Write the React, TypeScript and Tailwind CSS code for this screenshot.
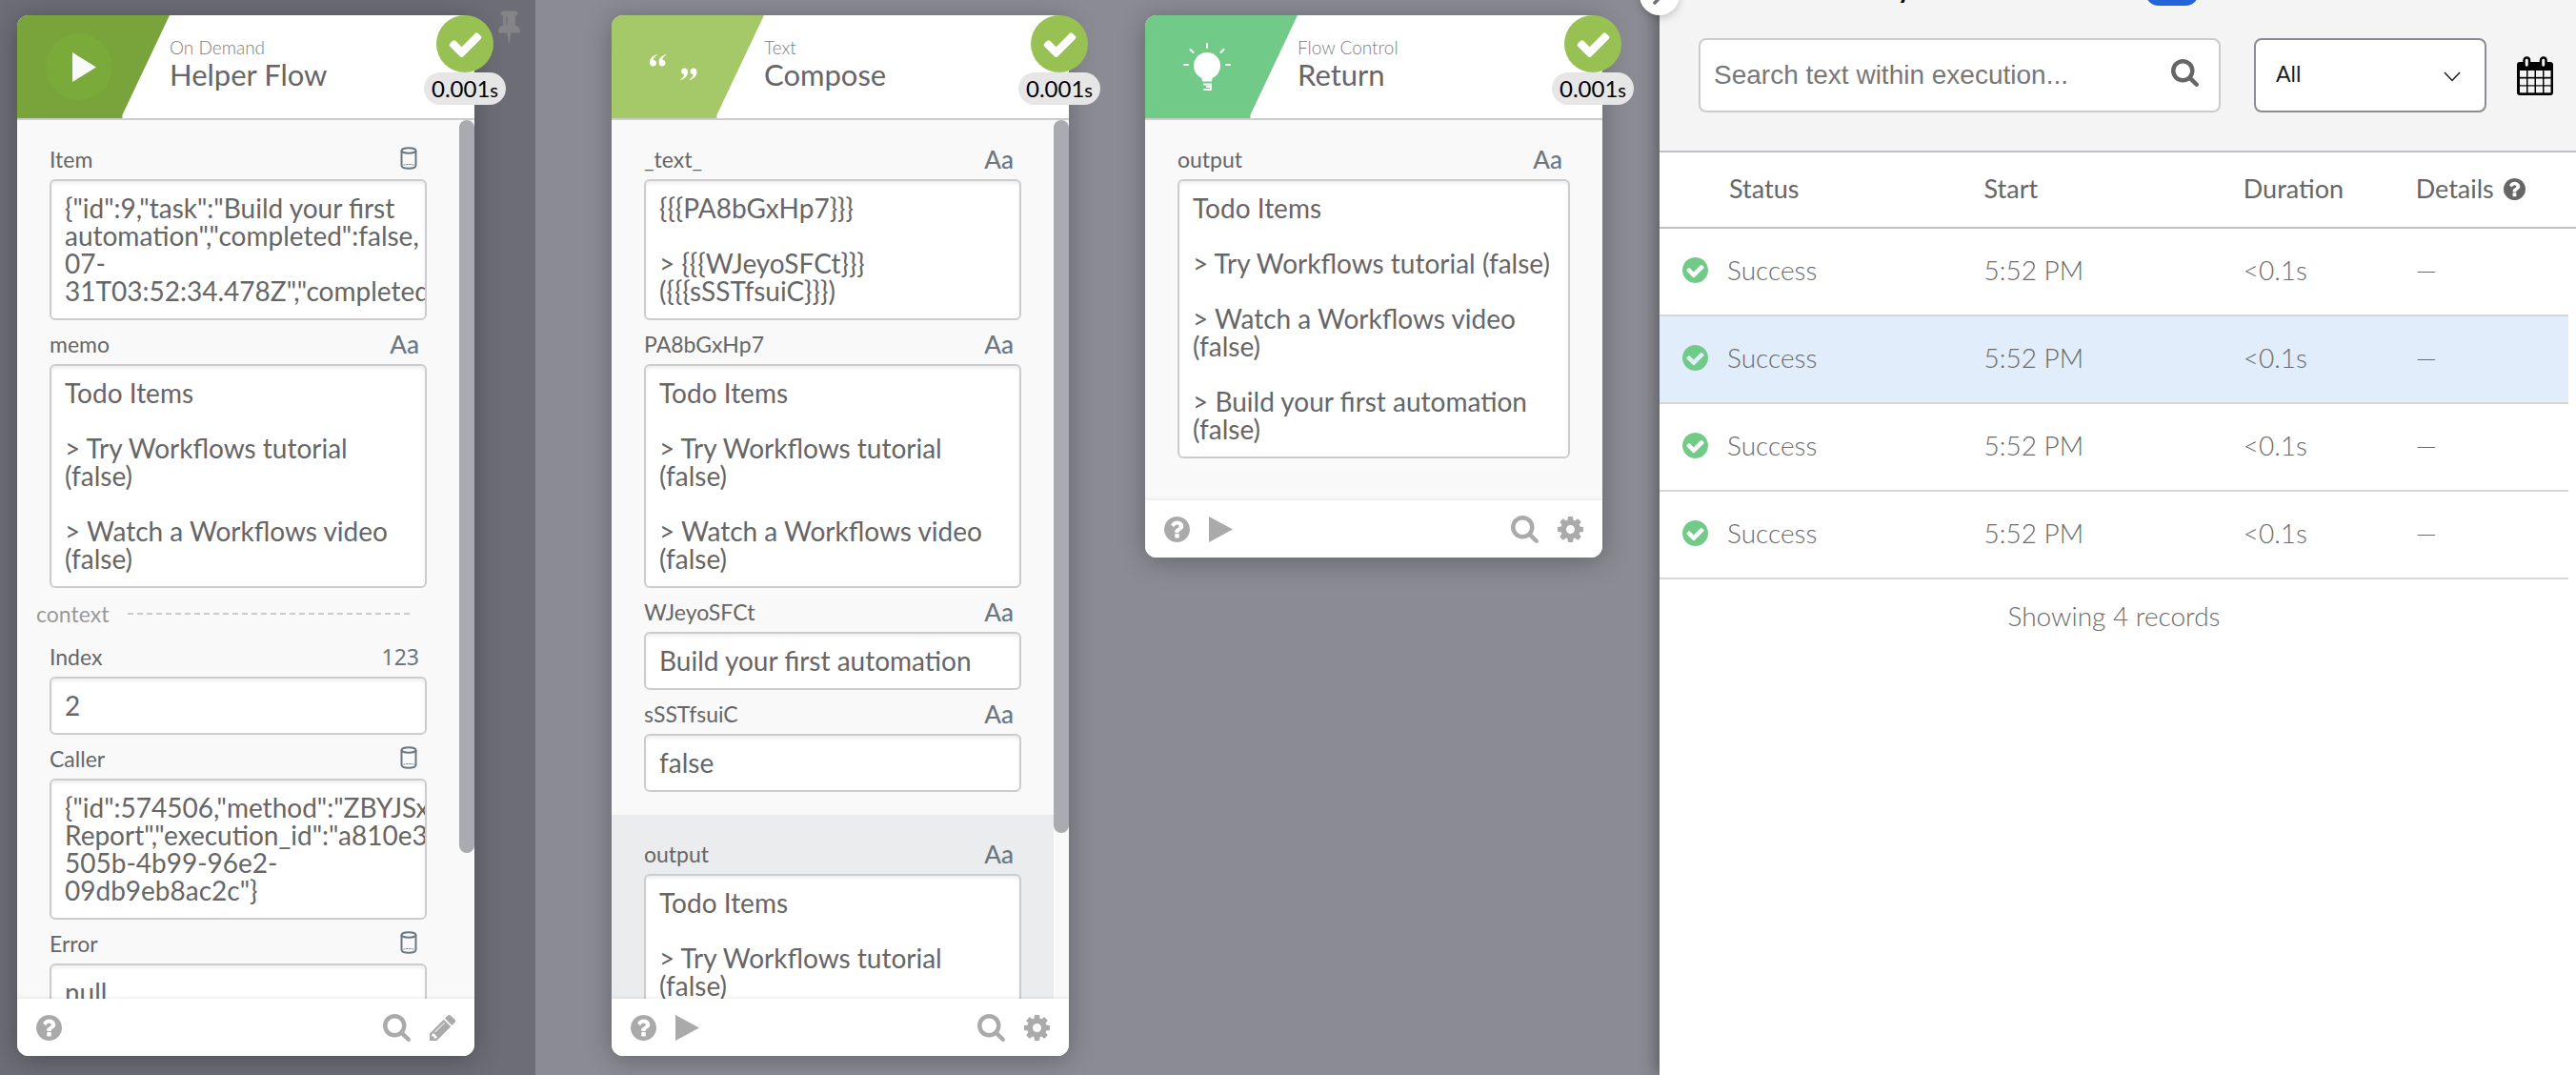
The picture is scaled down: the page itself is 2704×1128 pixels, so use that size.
import type { ReactNode } from "react";

type FieldType = "object" | "text" | "number";
type Field = { label: string; type: FieldType; value: string };

function Fa({ d, box, className }: { d: string; box: string; className: string }) {
  return (
    <svg viewBox={box} className={className} fill="currentColor" aria-hidden="true">
      <path d={d} />
    </svg>
  );
}

const SEARCH =
  "M1216 832q0-185-131.5-316.5t-316.5-131.5-316.5 131.5-131.5 316.5 131.5 316.5 316.5 131.5 316.5-131.5 131.5-316.5zm512 832q0 52-38 90t-90 38q-54 0-90-38l-343-342q-179 124-399 124-143 0-273.5-55.5t-225-150-150-225-55.5-273.5 55.5-273.5 150-225 225-150 273.5-55.5 273.5 55.5 225 150 150 225 55.5 273.5q0 220-124 399l343 343q37 37 37 90z";
const COG =
  "M1152 896q0-106-75-181t-181-75-181 75-75 181 75 181 181 75 181-75 75-181zm512-109v222q0 12-8 23t-20 13l-185 28q-19 54-39 91 35 50 107 138 10 12 10 25t-9 23q-27 37-99 108t-94 71q-12 0-26-9l-138-108q-44 23-91 38-16 136-29 186-7 28-36 28h-222q-14 0-24.5-8.5t-11.5-21.5l-28-184q-49-16-90-37l-141 107q-10 9-25 9-14 0-25-11-126-114-165-168-7-10-7-23 0-12 8-23 15-21 51-66.5t54-70.5q-27-50-41-99l-183-27q-13-2-21-12.5t-8-23.5v-222q0-12 8-23t19-13l186-28q14-46 39-92-40-57-107-138-10-12-10-24 0-10 9-23 26-36 98.5-107.5t94.5-71.5q13 0 26 10l138 107q44-23 91-38 16-136 29-186 7-28 36-28h222q14 0 24.5 8.5t11.5 21.5l28 184q49 16 90 37l142-107q9-9 24-9 13 0 25 10 129 119 165 170 7 8 7 22 0 12-8 23-15 21-51 66.5t-54 70.5q26 50 41 98l183 28q13 2 21 12.5t8 23.5z";
const HELP =
  "M1024 1376v-192q0-14-9-23t-23-9h-192q-14 0-23 9t-9 23v192q0 14 9 23t23 9h192q14 0 23-9t9-23zm256-672q0-88-55.5-163t-138.5-116-170-41q-243 0-371 213-15 24 8 42l132 100q7 6 19 6 16 0 25-12 53-68 86-92 34-24 86-24 48 0 85.5 26t37.5 59q0 38-20 61t-68 45q-63 28-115.5 86.5t-52.5 125.5v36q0 14 9 23t23 9h192q14 0 23-9t9-23q0-19 21.5-49.5t54.5-49.5q32-18 49-28.5t46-35 44.5-48 28-60.5 12.5-81zm384 192q0 209-103 385.5t-279.5 279.5-385.5 103-385.5-103-279.5-279.5-103-385.5 103-385.5 279.5-279.5 385.5-103 385.5 103 279.5 279.5 103 385.5z";
const PENCIL =
  "M491 1536l91-91-235-235-91 91v107h128v128h107zm523-928q0-22-22-22-10 0-17 7l-542 542q-7 7-7 17 0 22 22 22 10 0 17-7l542-542q7-7 7-17zm-54-192l416 416-832 832h-416v-416zm683 96q0 53-37 90l-166 166-416-416 166-165q36-38 90-38 53 0 91 38l235 234q37 39 37 91z";
const CHECK =
  "M1671 566q0 40-28 68l-724 724-136 136q-28 28-68 28t-68-28l-136-136-362-362q-28-28-28-68t28-68l136-136q28-28 68-28t68 28l294 295 656-657q28-28 68-28t68 28l136 136q28 28 28 68z";
const CHECK_CIRCLE =
  "M1412 734q0-28-18-46l-91-90q-19-19-45-19t-45 19l-408 407-226-226q-19-19-45-19t-45 19l-91 90q-18 18-18 46 0 27 18 45l362 362q19 19 45 19 27 0 46-19l543-543q18-18 18-45zm252 162q0 209-103 385.5t-279.5 279.5-385.5 103-385.5-103-279.5-279.5-103-385.5 103-385.5 279.5-279.5 385.5-103 385.5 103 279.5 279.5 103 385.5z";
const PIN =
  "M800 864v-448q0-14-9-23t-23-9-23 9-9 23v448q0 14 9 23t23 9 23-9 9-23zm672 352q0 26-19 45t-45 19h-429l-51 483q-2 12-10.5 20.5t-20.5 8.5h-1q-27 0-32-27l-76-485h-404q-26 0-45-19t-19-45q0-123 78.5-221.5t177.5-98.5v-512q-52 0-90-38t-38-90 38-90 90-38h640q52 0 90 38t38 90-38 90-90 38v512q99 0 177.5 98.5t78.5 221.5z";

const ROUND_BOX = "128 128 1536 1536";

function TypeMark({ type }: { type: FieldType }) {
  if (type === "text") return <span className="pr-2 text-[26px] leading-none font-medium text-[#6b7780]">Aa</span>;
  if (type === "number")
    return <span className="pr-2 font-['Noto_Sans',sans-serif] text-[23px] leading-none text-[#6b7780]">123</span>;
  return (
    <svg viewBox="0 0 18 24" className="mr-2.5 mb-0.5 h-6 w-[18px]" fill="none" stroke="#6b7780" strokeWidth="2" aria-hidden="true">
      <ellipse cx="9" cy="4" rx="7.5" ry="2.8" />
      <path d="M1.500 4v15.500c0 2 3.400 3.200 7.500 3.200s7.500-1.200 7.500-3.200V4" />
      <path d="M3.500 19.200c2-1 9-1 11 0" strokeWidth="1" strokeDasharray="2 1" />
    </svg>
  );
}

function FieldBox({ card, field }: { card: string; field: Field }) {
  const id = `${card}-${field.label}`;
  return (
    <div>
      <div className="flex h-[46px] items-center justify-between pt-1">
        <label htmlFor={id} className="text-[23px] leading-6 text-[#666]">
          {field.label}
        </label>
        <TypeMark type={field.type} />
      </div>
      <textarea
        id={id}
        readOnly
        wrap="off"
        rows={field.value.split("\n").length}
        value={field.value}
        className="block w-full resize-none overflow-hidden rounded-md border-2 border-[#ccc] bg-white px-3.5 py-3.5 text-[28px] leading-[29px] text-[#666] shadow-[inset_0_3px_3px_rgba(0,0,0,0.06)] outline-none"
      />
    </div>
  );
}

function IconButton({ label, children }: { label: string; children: ReactNode }) {
  return (
    <button type="button" aria-label={label} className="text-[#aaa]">
      {children}
    </button>
  );
}

function Card({
  tint,
  icon,
  category,
  title,
  children,
  thumb,
  editable,
  stretch,
}: {
  tint: string;
  icon: ReactNode;
  category: string;
  title: string;
  children: ReactNode;
  thumb?: string;
  editable?: boolean;
  stretch?: boolean;
}) {
  return (
    <section
      className={`relative flex w-[480px] shrink-0 flex-col rounded-xl bg-white shadow-[0_4px_28px_rgba(0,0,0,0.28)] ${stretch ? "h-full" : ""}`}
    >
      <header className="flex h-[110px] shrink-0 border-b-2 border-[#ccc]">
        <div
          className={`w-40 rounded-tl-xl [clip-path:polygon(0_0,100%_0,69%_97%,69%_100%,0_100%)] ${tint}`}
        >
          <div className="flex h-full w-[130px] items-center justify-center">{icon}</div>
        </div>
        <div className="flex flex-col pt-6 whitespace-nowrap">
          <span className="text-[19px] leading-5 font-light text-[#7c7c7c]">{category}</span>
          <h2 className="text-[31px] leading-9 text-[#666]">{title}</h2>
        </div>
      </header>
      <div className="absolute top-0 -right-[33px] flex flex-col items-center">
        <span className="flex size-[60px] items-center justify-center rounded-full bg-[#97c153] text-white">
          <Fa d={CHECK} box="0 0 1792 1792" className="size-[39px]" />
        </span>
        <span className="flex h-[34px] w-[86px] items-center justify-center rounded-full bg-[#e6e6e6] text-black">
          <span className="text-2xl leading-none">
            0.001<span className="text-xl leading-none">s</span>
          </span>
        </span>
      </div>
      <div className="flex min-h-0 flex-1 overflow-hidden bg-[#f9f9f9]">
        <div className="min-w-0 flex-1">{children}</div>
        {thumb && (
          <div className="w-4 shrink-0">
            <div className={`rounded-full bg-[#a9abb0] ${thumb}`} />
          </div>
        )}
      </div>
      <footer className="flex h-[60px] shrink-0 items-center justify-between rounded-b-xl bg-white px-5 shadow-[0_-2px_3px_rgba(0,0,0,0.05)]">
        <div className="flex items-center gap-5">
          <IconButton label="Help">
            <Fa d={HELP} box={ROUND_BOX} className="size-[27px]" />
          </IconButton>
          {!editable && (
            <IconButton label="Run">
              <Fa d="M0 0L25 13.500L0 27z" box="0 0 25 27" className="h-[27px] w-[25px]" />
            </IconButton>
          )}
        </div>
        <div className="flex items-center gap-5">
          <IconButton label="Inspect">
            <Fa d={SEARCH} box="64 128 1664 1664" className="size-[29px]" />
          </IconButton>
          {editable ? (
            <IconButton label="Edit">
              <Fa d={PENCIL} box="128 149 1515 1515" className="size-[27px]" />
            </IconButton>
          ) : (
            <IconButton label="Settings">
              <Fa d={COG} box={ROUND_BOX} className="size-[27px]" />
            </IconButton>
          )}
        </div>
      </footer>
    </section>
  );
}

function PlayIcon() {
  return (
    <span className="flex size-[70px] items-center justify-center rounded-full bg-[#7aaa3a] text-[#f9f9f9]">
      <svg viewBox="0 0 50 50" className="size-[50px]" fill="currentColor" aria-hidden="true">
        <path d="M18 10l25 15.500L18 41z" />
      </svg>
    </span>
  );
}

function QuoteIcon() {
  const open = "M7.500 0C3 1.500 0 4.500 0 8.500 0 11 1.500 12.500 3.500 12.500S7 11 7 9 5.500 6 3.800 6C4 4 5.500 2 7.800 .800z";
  return (
    <svg viewBox="0 0 50 50" className="size-[50px]" fill="#fff" aria-hidden="true">
      <path d={open} transform="translate(0 12)" />
      <path d={open} transform="translate(9.500 12)" />
      <path d={open} transform="translate(40 39) rotate(180)" />
      <path d={open} transform="translate(49.500 39) rotate(180)" />
    </svg>
  );
}

function BulbIcon() {
  return (
    <svg viewBox="0 0 50 50" className="size-[50px]" fill="none" stroke="#fff" strokeWidth="2" strokeLinecap="round" aria-hidden="true">
      <circle cx="25" cy="24" r="14" fill="#fff" stroke="none" />
      <path d="M19 34h12l-1 6.500H20z" fill="#fff" stroke="none" />
      <path d="M21 43.500h8v2.500h-5M21 49h8v-3" strokeWidth="1.800" strokeLinecap="butt" />
      <path d="M25 1v4M1 23h4M45 23h4M7.500 7l3 3M42.500 7l-3 3" />
    </svg>
  );
}

const todo = "Todo Items\n\n> Try Workflows tutorial\n(false)\n\n> Watch a Workflows video\n(false)";

const helperInputs: Field[] = [
  {
    label: "Item",
    type: "object",
    value: '{"id":9,"task":"Build your first\nautomation","completed":false,\n07-\n31T03:52:34.478Z","completed',
  },
  { label: "memo", type: "text", value: todo },
];
const helperContext: Field[] = [
  { label: "Index", type: "number", value: "2" },
  {
    label: "Caller",
    type: "object",
    value: '{"id":574506,"method":"ZBYJSx\nReport","execution_id":"a810e3\n505b-4b99-96e2-\n09db9eb8ac2c"}',
  },
  { label: "Error", type: "object", value: "null" },
];
const composeInputs: Field[] = [
  { label: "_text_", type: "text", value: "{{{PA8bGxHp7}}}\n\n> {{{WJeyoSFCt}}}\n({{{sSSTfsuiC}}})" },
  { label: "PA8bGxHp7", type: "text", value: todo },
  { label: "WJeyoSFCt", type: "text", value: "Build your first automation" },
  { label: "sSSTfsuiC", type: "text", value: "false" },
];
const composeOutput: Field = { label: "output", type: "text", value: todo };
const returnOutput: Field = {
  label: "output",
  type: "text",
  value:
    "Todo Items\n\n> Try Workflows tutorial (false)\n\n> Watch a Workflows video\n(false)\n\n> Build your first automation\n(false)",
};

const records = [
  { status: "Success", start: "5:52 PM", duration: "<0.1s", details: "—", active: false },
  { status: "Success", start: "5:52 PM", duration: "<0.1s", details: "—", active: true },
  { status: "Success", start: "5:52 PM", duration: "<0.1s", details: "—", active: false },
  { status: "Success", start: "5:52 PM", duration: "<0.1s", details: "—", active: false },
];

function HistoryPanel() {
  return (
    <aside className="relative h-full w-[962px] shrink-0 bg-white shadow-[-4px_0_16px_rgba(0,0,0,0.35)]">
      <button
        type="button"
        aria-label="Collapse panel"
        className="absolute -top-[26px] -left-[21px] flex size-[42px] items-center justify-center rounded-full bg-white shadow-[0_3px_8px_rgba(0,0,0,0.2)]"
      >
        <svg viewBox="0 0 24 24" className="size-6" fill="none" stroke="#6e6e78" strokeWidth="3.500" strokeLinecap="round" aria-hidden="true">
          <path d="M7 1l9 9.500L7 20" />
        </svg>
      </button>
      <div className="h-40 overflow-hidden border-b-2 border-[#bfbfc5] bg-[#f4f4f4]">
        <div className="-mt-[34px] flex h-10 w-[566px] items-end justify-between pl-[41px]">
          <h1 className="self-start text-[28px] leading-[42px] font-bold whitespace-nowrap text-black">Execution History</h1>
          <span className="h-7 w-14 rounded-full bg-[#2563d9]" />
        </div>
        <div className="mt-[34px] flex items-center pr-6 pl-[41px]">
          <div className="relative w-[548px]">
            <input
              type="text"
              aria-label="Search text within execution"
              placeholder="Search text within execution..."
              className="block h-[78px] w-full rounded-lg border-2 border-[#ccc] bg-white pr-16 pl-3.5 font-['Liberation_Sans',sans-serif] text-[28px] text-[#666] outline-none placeholder:text-[#777]"
            />
            <button type="button" aria-label="Search" className="absolute top-[22px] right-[23px] text-[#666]">
              <Fa d={SEARCH} box="64 128 1664 1664" className="size-[29px]" />
            </button>
          </div>
          <div className="relative ml-[35px] w-[244px]">
            <select
              aria-label="Status filter"
              className="block h-[78px] w-full appearance-none rounded-lg border-2 border-[#8c8c96] bg-white pb-1 pl-[21px] text-[23px] text-[#1d1d21] outline-none"
            >
              <option>All</option>
            </select>
            <svg viewBox="0 0 18 11" className="pointer-events-none absolute top-[35px] right-[27px] h-[11px] w-[18px]" fill="none" stroke="#1d1d21" strokeWidth="1.500" aria-hidden="true">
              <path d="M1 1l8 8.500L17 1" />
            </svg>
          </div>
          <button type="button" aria-label="Pick dates" className="ml-8">
            <svg viewBox="0 0 38 41" className="h-[41px] w-[38px]" aria-hidden="true">
              <rect x="0" y="6" width="38" height="35" rx="3" fill="#000" />
              <g fill="#f4f4f4">
                {[15, 23.500, 31.500].map((y) =>
                  [3, 11.500, 20, 28.500].map((x) => <rect key={`${x}-${y}`} x={x} y={y} width="7" height="6.800" />),
                )}
              </g>
              <rect x="7.500" y="1.500" width="5.500" height="10.500" rx="2.700" fill="#f4f4f4" stroke="#000" strokeWidth="2.500" />
              <rect x="25" y="1.500" width="5.500" height="10.500" rx="2.700" fill="#f4f4f4" stroke="#000" strokeWidth="2.500" />
            </svg>
          </button>
        </div>
      </div>
      <table className="w-full table-fixed border-separate border-spacing-0 text-left text-[28px] leading-8">
        <colgroup>
          <col className="w-[35.4%]" />
          <col className="w-[28.3%]" />
          <col className="w-[18.8%]" />
          <col />
          <col className="w-2" />
        </colgroup>
        <thead>
          <tr className="h-20 text-[27px] text-[#666] [&>*]:border-b-2 [&>*]:border-[#bfbfc5] [&>th]:pb-0.5 [&>th]:font-normal">
            <th scope="col" className="pl-[73px]">
              Status
            </th>
            <th scope="col">Start</th>
            <th scope="col">Duration</th>
            <th scope="col">
              <span className="flex items-center gap-2.5">
                Details
                <Fa d={HELP} box={ROUND_BOX} className="size-[23px]" />
              </span>
            </th>
            <td />
          </tr>
        </thead>
        <tbody>
          {records.map((r, i) => (
            <tr
              key={i}
              className={`h-[92px] font-light text-[#6b6b6b] [&>td]:pb-1 [&>td:not(:last-child)]:border-b-2 [&>td:not(:last-child)]:border-[#d6d6d6] ${r.active ? "[&>td:not(:last-child)]:bg-[#e1edfb]" : ""}`}
            >
              <td>
                <span className="flex items-center gap-5 pl-6">
                  <span className="text-[#71ca88]">
                    <Fa d={CHECK_CIRCLE} box={ROUND_BOX} className="size-[27px]" />
                  </span>
                  {r.status}
                </span>
              </td>
              <td>{r.start}</td>
              <td>{r.duration}</td>
              <td>{r.details}</td>
              <td />
            </tr>
          ))}
        </tbody>
      </table>
      <p className="mt-[22px] mr-2 text-center text-[28px] leading-8 font-light text-[#6b6b6b]">Showing 4 records</p>
    </aside>
  );
}

export default function App() {
  return (
    <main className="flex h-screen overflow-hidden bg-[#8b8b94] font-['Lato',sans-serif]">
      <div className="relative h-full w-[562px] shrink-0 bg-[#6d6d76] px-[18px] pt-4 pb-5">
        <Card tint="bg-[#79a33b]" icon={<PlayIcon />} category="On Demand" title="Helper Flow" thumb="h-[769px]" editable stretch>
          <div className="px-[34px] pt-4">
            {helperInputs.map((f) => (
              <FieldBox key={f.label} card="helper" field={f} />
            ))}
            <div className="-ml-3.5 flex h-[47px] items-center gap-5 pt-1.5 pr-4">
              <span className="text-[23px] leading-6 text-[#999]">context</span>
              <span className="h-0.5 flex-1 bg-[repeating-linear-gradient(90deg,#ccc_0_6px,transparent_6px_10px)]" />
            </div>
            {helperContext.map((f) => (
              <FieldBox key={f.label} card="helper" field={f} />
            ))}
          </div>
        </Card>
        <button type="button" aria-label="Pin" className="absolute top-[11px] right-4 text-[#858588]">
          <Fa d={PIN} box="320 128 1152 1664" className="h-[34px] w-[23px]" />
        </button>
      </div>
      <div className="flex h-full min-w-0 flex-1 items-start gap-20 px-20 pt-4 pb-5">
        <Card tint="bg-[#a5c968]" icon={<QuoteIcon />} category="Text" title="Compose" thumb="h-[748px]" stretch>
          <div className="px-[34px] pt-4 pb-6">
            {composeInputs.map((f) => (
              <FieldBox key={f.label} card="compose" field={f} />
            ))}
          </div>
          <div className="bg-[#ebeced] px-[34px] pt-4">
            <FieldBox card="compose" field={composeOutput} />
          </div>
        </Card>
        <Card tint="bg-[#71ca88]" icon={<BulbIcon />} category="Flow Control" title="Return">
          <div className="px-[34px] pt-4 pb-11">
            <FieldBox card="return" field={returnOutput} />
          </div>
        </Card>
      </div>
      <HistoryPanel />
    </main>
  );
}
